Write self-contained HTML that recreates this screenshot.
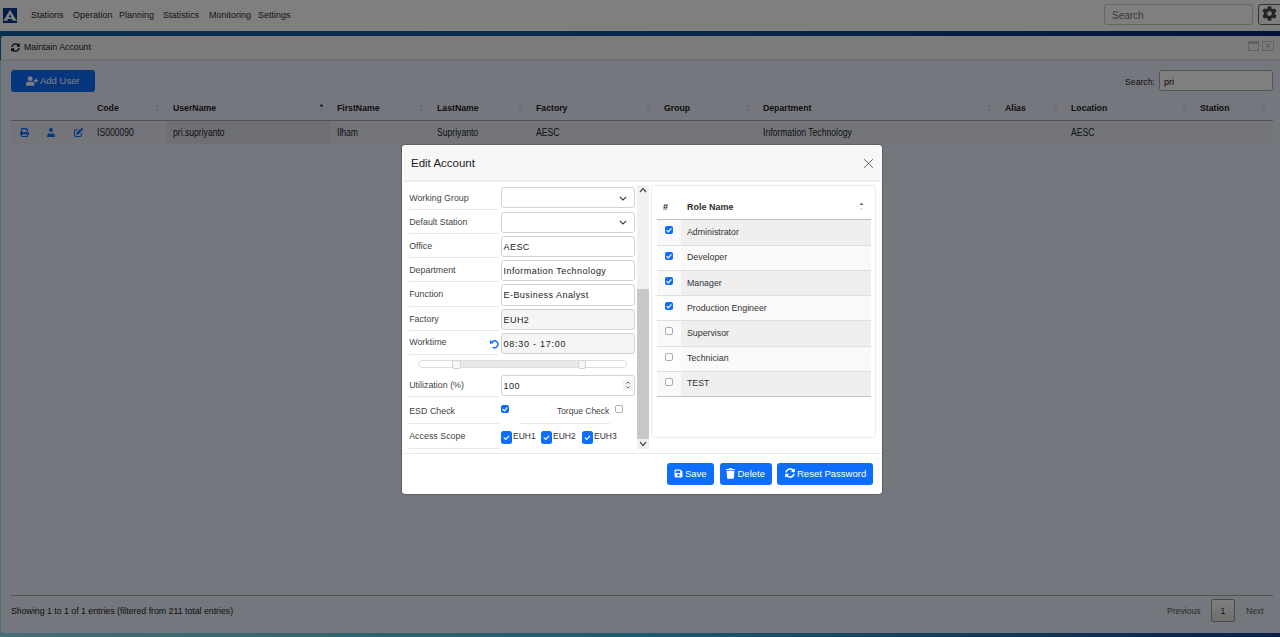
<!DOCTYPE html>
<html><head><meta charset="utf-8"><title>Maintain Account</title>
<style>
html,body{margin:0;padding:0;}
body{width:1280px;height:637px;overflow:hidden;position:relative;font-family:"Liberation Sans", sans-serif;
background:linear-gradient(90deg,#14609f 0%,#1054a0 50%,#082474 100%) 0 0/100% 60px no-repeat,linear-gradient(90deg,#90dde6 0%,#3eb4dc 50%,#144090 100%);}
.t{position:absolute;white-space:nowrap;}
.r{position:absolute;}
svg.r{display:block;}
</style></head><body>
<div class="r" style="left:0px;top:0px;width:1280px;height:31px;background:#fff;"></div>
<svg class="r" style="left:3px;top:8px" width="14" height="15" viewBox="0 0 14 15"><rect width="14" height="15" fill="#0a3a8c"/><path fill-rule="evenodd" d="M7 1.8 L13.9 12.8 H9.7 L8.9 10.9 H5.1 L4.3 12.8 H0.3 Z M7 6.2 L8.4 9.2 H5.6 Z" fill="#fff"/></svg>
<div class="t" style="left:30.50px;top:8.23px;font-size:9.9px;line-height:13px;color:#2a2a2a;transform:scaleX(0.9091);transform-origin:0 0;">Stations</div>
<div class="t" style="left:72.50px;top:8.23px;font-size:9.9px;line-height:13px;color:#2a2a2a;transform:scaleX(0.9091);transform-origin:0 0;">Operation</div>
<div class="t" style="left:119.30px;top:8.23px;font-size:9.9px;line-height:13px;color:#2a2a2a;transform:scaleX(0.9091);transform-origin:0 0;">Planning</div>
<div class="t" style="left:162.80px;top:8.23px;font-size:9.9px;line-height:13px;color:#2a2a2a;transform:scaleX(0.9091);transform-origin:0 0;">Statistics</div>
<div class="t" style="left:208.70px;top:8.23px;font-size:9.9px;line-height:13px;color:#2a2a2a;transform:scaleX(0.9091);transform-origin:0 0;">Monitoring</div>
<div class="t" style="left:258.40px;top:8.23px;font-size:9.9px;line-height:13px;color:#2a2a2a;transform:scaleX(0.9091);transform-origin:0 0;">Settings</div>
<div class="r" style="left:1104px;top:4px;width:149px;height:21px;background:#fff;border:1px solid #ccc;border-radius:3px;box-sizing:border-box;"></div>
<div class="t" style="left:1112.00px;top:8.80px;font-size:10px;line-height:13px;color:#777;">Search</div>
<div class="r" style="left:1258px;top:4px;width:30px;height:21px;background:#fff;border:1px solid #666;border-radius:3px;box-sizing:border-box;"></div>
<svg class="r" style="left:1262px;top:6px" width="15" height="15" viewBox="0 0 512 512"><path fill="#4a4a4a" d="M487.4 315.7l-42.6-24.6c4.3-23.2 4.3-47 0-70.2l42.6-24.6c4.9-2.8 7.1-8.6 5.5-14-11.1-35.6-30-67.8-54.7-94.6-3.8-4.1-10-5.1-14.8-2.3L380.8 110c-17.9-15.4-38.5-27.3-60.8-35.1V25.8c0-5.6-3.9-10.5-9.4-11.7-36.7-8.2-74.3-7.8-109.2 0-5.5 1.2-9.4 6.1-9.4 11.7V75c-22.2 7.9-42.8 19.8-60.8 35.1L88.7 85.5c-4.9-2.8-11-1.9-14.8 2.3-24.7 26.7-43.6 58.9-54.7 94.6-1.7 5.4.6 11.2 5.5 14L67.3 221c-4.3 23.2-4.3 47 0 70.2l-42.6 24.6c-4.9 2.8-7.1 8.6-5.5 14 11.1 35.6 30 67.8 54.7 94.6 3.8 4.1 10 5.1 14.8 2.3l42.6-24.6c17.9 15.4 38.5 27.3 60.8 35.1v49.2c0 5.6 3.9 10.5 9.4 11.7 36.7 8.2 74.3 7.8 109.2 0 5.5-1.2 9.4-6.1 9.4-11.7v-49.2c22.2-7.9 42.8-19.8 60.8-35.1l42.6 24.6c4.9 2.8 11 1.9 14.8-2.3 24.7-26.7 43.6-58.9 54.7-94.6 1.5-5.5-.7-11.3-5.6-14.1zM256 336c-44.1 0-80-35.9-80-80s35.9-80 80-80 80 35.9 80 80-35.9 80-80 80z"/></svg>
<div class="r" style="left:1px;top:36px;width:1279px;height:597px;background:#e9eefa;border-radius:3px 0 0 3px;"></div>
<div class="r" style="left:1px;top:36px;width:1279px;height:25px;background:#f6f6f6;border-bottom:2px solid #dddee3;box-sizing:border-box;border-radius:3px 0 0 0;"></div>
<svg class="r" style="left:11px;top:42.5px" width="9" height="9" viewBox="0 0 512 512"><path fill="#111" d="M370.7 133.3C339.5 104 298.9 88 255.8 88c-77.5.1-144.3 53.2-162.8 126.9-1.3 5.4-6.1 9.2-11.7 9.2H24.1c-7.5 0-13.2-6.8-11.8-14.2C33.9 94.9 134.8 8 256 8c66.4 0 126.8 26.1 171.3 68.7L463 41c15.1-15.1 41-4.4 41 17v134c0 13.3-10.7 24-24 24H346c-21.4 0-32.1-25.9-17-41l41.7-41.7zM32 296h134c21.4 0 32.1 25.9 17 41l-41.7 41.7c31.2 29.3 71.8 45.3 114.9 45.3 77.4-.1 144.3-53.1 162.8-126.8 1.3-5.4 6.1-9.2 11.7-9.2h57.3c7.5 0 13.2 6.8 11.8 14.2C478.1 417.1 377.2 504 256 504c-66.4 0-126.8-26.1-171.3-68.7L49 471c-15.1 15.1-41 4.4-41-17V320c0-13.3 10.7-24 24-24z"/></svg>
<div class="t" style="left:24.00px;top:40.13px;font-size:9.9px;line-height:13px;color:#222;transform:scaleX(0.8889);transform-origin:0 0;">Maintain Account</div>
<div class="r" style="left:1248px;top:41px;width:11px;height:10px;border:1px solid #c4c4c4;border-top:3px solid #c4c4c4;box-sizing:border-box;background:#f5f5f5;"></div>
<div class="r" style="left:1262px;top:41px;width:12px;height:10px;border:1px solid #c8c8c8;box-sizing:border-box;background:#f5f5f5;"></div>
<svg class="r" style="left:1262px;top:41px" width="12" height="10" viewBox="0 0 12 10"><path d="M4 2.5 L8 7.5 M8 2.5 L4 7.5" stroke="#b8b8b8" stroke-width="1"/></svg>
<div class="r" style="left:11px;top:70px;width:84px;height:22px;background:#0d6efd;border-radius:3px;"></div>
<svg class="r" style="left:26px;top:76px" width="12" height="10" viewBox="0 0 640 512"><path fill="#fff" d="M624 208h-64v-64c0-8.8-7.2-16-16-16h-32c-8.8 0-16 7.2-16 16v64h-64c-8.8 0-16 7.2-16 16v32c0 8.8 7.2 16 16 16h64v64c0 8.8 7.2 16 16 16h32c8.8 0 16-7.2 16-16v-64h64c8.8 0 16-7.2 16-16v-32c0-8.8-7.2-16-16-16zm-400 48c70.7 0 128-57.3 128-128S294.7 0 224 0 96 57.3 96 128s57.3 128 128 128zm89.6 32h-16.7c-22.2 10.2-46.9 16-72.9 16s-50.6-5.8-72.9-16h-16.7C60.2 288 0 348.2 0 422.4V464c0 26.5 21.5 48 48 48h352c26.5 0 48-21.5 48-48v-41.6c0-74.2-60.2-134.4-134.4-134.4z"/></svg>
<div class="t" style="left:40.00px;top:75.36px;font-size:9.5px;line-height:12px;color:#fff;">Add User</div>
<div class="t" style="left:1125.00px;top:74.59px;font-size:9.7px;line-height:13px;color:#222;transform:scaleX(0.8969);transform-origin:0 0;">Search:</div>
<div class="r" style="left:1159px;top:70px;width:114px;height:21px;background:#fff;border:1px solid #aaa;border-radius:3px;box-sizing:border-box;"></div>
<div class="t" style="left:1164.00px;top:75.53px;font-size:9px;line-height:12px;color:#111;">pri</div>
<div class="t" style="left:97.30px;top:102.06px;font-size:9.5px;line-height:12px;color:#222;font-weight:700;transform:scaleX(0.9158);transform-origin:0 0;">Code</div>
<svg class="r" style="left:155px;top:103px" width="5" height="10" viewBox="0 0 5 10"><path d="M0.5 3.5 L2.5 1 L4.5 3.5Z" fill="#d4d4d4"/><path d="M0.5 6.5 L2.5 9 L4.5 6.5Z" fill="#d4d4d4"/></svg>
<div class="t" style="left:173.30px;top:102.06px;font-size:9.5px;line-height:12px;color:#222;font-weight:700;transform:scaleX(0.9158);transform-origin:0 0;">UserName</div>
<svg class="r" style="left:319px;top:103px" width="5" height="10" viewBox="0 0 5 10"><path d="M0.5 3.5 L2.5 1 L4.5 3.5Z" fill="#222"/><path d="M0.5 6.5 L2.5 9 L4.5 6.5Z" fill="#d4d4d4"/></svg>
<div class="t" style="left:337.30px;top:102.06px;font-size:9.5px;line-height:12px;color:#222;font-weight:700;transform:scaleX(0.9158);transform-origin:0 0;">FirstName</div>
<svg class="r" style="left:419px;top:103px" width="5" height="10" viewBox="0 0 5 10"><path d="M0.5 3.5 L2.5 1 L4.5 3.5Z" fill="#d4d4d4"/><path d="M0.5 6.5 L2.5 9 L4.5 6.5Z" fill="#d4d4d4"/></svg>
<div class="t" style="left:437.30px;top:102.06px;font-size:9.5px;line-height:12px;color:#222;font-weight:700;transform:scaleX(0.9158);transform-origin:0 0;">LastName</div>
<svg class="r" style="left:518px;top:103px" width="5" height="10" viewBox="0 0 5 10"><path d="M0.5 3.5 L2.5 1 L4.5 3.5Z" fill="#d4d4d4"/><path d="M0.5 6.5 L2.5 9 L4.5 6.5Z" fill="#d4d4d4"/></svg>
<div class="t" style="left:536.30px;top:102.06px;font-size:9.5px;line-height:12px;color:#222;font-weight:700;transform:scaleX(0.9158);transform-origin:0 0;">Factory</div>
<svg class="r" style="left:646px;top:103px" width="5" height="10" viewBox="0 0 5 10"><path d="M0.5 3.5 L2.5 1 L4.5 3.5Z" fill="#d4d4d4"/><path d="M0.5 6.5 L2.5 9 L4.5 6.5Z" fill="#d4d4d4"/></svg>
<div class="t" style="left:664.30px;top:102.06px;font-size:9.5px;line-height:12px;color:#222;font-weight:700;transform:scaleX(0.9158);transform-origin:0 0;">Group</div>
<svg class="r" style="left:745px;top:103px" width="5" height="10" viewBox="0 0 5 10"><path d="M0.5 3.5 L2.5 1 L4.5 3.5Z" fill="#d4d4d4"/><path d="M0.5 6.5 L2.5 9 L4.5 6.5Z" fill="#d4d4d4"/></svg>
<div class="t" style="left:763.30px;top:102.06px;font-size:9.5px;line-height:12px;color:#222;font-weight:700;transform:scaleX(0.9158);transform-origin:0 0;">Department</div>
<svg class="r" style="left:987px;top:103px" width="5" height="10" viewBox="0 0 5 10"><path d="M0.5 3.5 L2.5 1 L4.5 3.5Z" fill="#d4d4d4"/><path d="M0.5 6.5 L2.5 9 L4.5 6.5Z" fill="#d4d4d4"/></svg>
<div class="t" style="left:1005.30px;top:102.06px;font-size:9.5px;line-height:12px;color:#222;font-weight:700;transform:scaleX(0.9158);transform-origin:0 0;">Alias</div>
<svg class="r" style="left:1053px;top:103px" width="5" height="10" viewBox="0 0 5 10"><path d="M0.5 3.5 L2.5 1 L4.5 3.5Z" fill="#d4d4d4"/><path d="M0.5 6.5 L2.5 9 L4.5 6.5Z" fill="#d4d4d4"/></svg>
<div class="t" style="left:1071.30px;top:102.06px;font-size:9.5px;line-height:12px;color:#222;font-weight:700;transform:scaleX(0.9158);transform-origin:0 0;">Location</div>
<svg class="r" style="left:1182px;top:103px" width="5" height="10" viewBox="0 0 5 10"><path d="M0.5 3.5 L2.5 1 L4.5 3.5Z" fill="#d4d4d4"/><path d="M0.5 6.5 L2.5 9 L4.5 6.5Z" fill="#d4d4d4"/></svg>
<div class="t" style="left:1200.30px;top:102.06px;font-size:9.5px;line-height:12px;color:#222;font-weight:700;transform:scaleX(0.9158);transform-origin:0 0;">Station</div>
<svg class="r" style="left:1261px;top:103px" width="5" height="10" viewBox="0 0 5 10"><path d="M0.5 3.5 L2.5 1 L4.5 3.5Z" fill="#d4d4d4"/><path d="M0.5 6.5 L2.5 9 L4.5 6.5Z" fill="#d4d4d4"/></svg>
<div class="r" style="left:11px;top:120px;width:1262px;height:1px;background:#a4a4a4;"></div>
<div class="r" style="left:11px;top:121px;width:1262px;height:23px;background:rgba(0,0,0,0.012);"></div>
<div class="r" style="left:167px;top:121px;width:164px;height:23px;background:rgba(0,0,0,0.045);"></div>
<div class="t" style="left:97.30px;top:126.29px;font-size:10px;line-height:13px;color:#222;transform:scaleX(0.8600);transform-origin:0 0;">IS000090</div>
<div class="t" style="left:173.30px;top:126.29px;font-size:10px;line-height:13px;color:#222;transform:scaleX(0.8600);transform-origin:0 0;">pri.supriyanto</div>
<div class="t" style="left:337.30px;top:126.29px;font-size:10px;line-height:13px;color:#222;transform:scaleX(0.8600);transform-origin:0 0;">Ilham</div>
<div class="t" style="left:437.20px;top:126.29px;font-size:10px;line-height:13px;color:#222;transform:scaleX(0.8600);transform-origin:0 0;">Supriyanto</div>
<div class="t" style="left:536.30px;top:126.29px;font-size:10px;line-height:13px;color:#222;transform:scaleX(0.8600);transform-origin:0 0;">AESC</div>
<div class="t" style="left:763.20px;top:126.29px;font-size:10px;line-height:13px;color:#222;transform:scaleX(0.8600);transform-origin:0 0;">Information Technology</div>
<div class="t" style="left:1071.30px;top:126.29px;font-size:10px;line-height:13px;color:#222;transform:scaleX(0.8600);transform-origin:0 0;">AESC</div>
<svg class="r" style="left:20px;top:128px" width="9" height="9" viewBox="0 0 512 512"><path fill="#0d6efd" d="M448 192V77.25c0-8.49-3.37-16.62-9.37-22.63L393.37 9.37c-6-6-14.14-9.37-22.63-9.37H96C78.33 0 64 14.33 64 32v160c-35.35 0-64 28.65-64 64v112c0 8.84 7.16 16 16 16h48v96c0 17.67 14.33 32 32 32h320c17.67 0 32-14.33 32-32v-96h48c8.84 0 16-7.16 16-16V256c0-35.35-28.65-64-64-64zm-64 256H128v-96h256v96zm0-224H128V64h192v48c0 8.84 7.16 16 16 16h48v96zm48 72c-13.25 0-24-10.75-24-24 0-13.26 10.75-24 24-24s24 10.74 24 24c0 13.25-10.75 24-24 24z"/></svg>
<svg class="r" style="left:47px;top:128px" width="8" height="9" viewBox="0 0 448 512"><circle cx="224" cy="118" r="112" fill="#0d6efd"/><path fill="#0d6efd" d="M130 292 L224 360 L318 292 C400 300 448 380 448 460 V512 H0 V460 C0 380 48 300 130 292Z"/></svg>
<svg class="r" style="left:74px;top:128px" width="9" height="9" viewBox="0 0 512 512"><path fill="#0d6efd" d="M471.6 21.7c-21.9-21.9-57.3-21.9-79.2 0L362.3 51.7l97.9 97.9 30.1-30.1c21.9-21.9 21.9-57.3 0-79.2L471.6 21.7zm-299.2 220c-6.1 6.1-10.8 13.6-13.5 21.9l-29.6 88.8c-2.9 8.6-.6 18.1 5.8 24.6s15.9 8.7 24.6 5.8l88.8-29.6c8.2-2.7 15.7-7.4 21.9-13.5L437.7 172.3 339.7 74.3 172.4 241.7zM96 64C43 64 0 107 0 160V416c0 53 43 96 96 96H352c53 0 96-43 96-96V320c0-17.7-14.3-32-32-32s-32 14.3-32 32v96c0 17.7-14.3 32-32 32H96c-17.7 0-32-14.3-32-32V160c0-17.7 14.3-32 32-32h96c17.7 0 32-14.3 32-32s-14.3-32-32-32H96z"/></svg>
<div class="r" style="left:11px;top:595px;width:1262px;height:1px;background:#a4a4a4;"></div>
<div class="t" style="left:10.60px;top:604.96px;font-size:9.5px;line-height:12px;color:#222;transform:scaleX(0.9211);transform-origin:0 0;">Showing 1 to 1 of 1 entries (filtered from 211 total entries)</div>
<div class="t" style="left:1167.00px;top:604.86px;font-size:9.5px;line-height:12px;color:#555;transform:scaleX(0.9053);transform-origin:0 0;">Previous</div>
<div class="r" style="left:1211px;top:599px;width:24px;height:23px;border:1px solid #979797;border-radius:2px;box-sizing:border-box;background:linear-gradient(#fff,#dcdcdc);"></div>
<div class="t" style="left:1220.50px;top:605.66px;font-size:8.6px;line-height:11px;color:#222;">1</div>
<div class="t" style="left:1245.50px;top:604.86px;font-size:9.5px;line-height:12px;color:#555;transform:scaleX(0.9053);transform-origin:0 0;">Next</div>
<div class="r" style="left:0px;top:0px;width:1280px;height:637px;background:rgba(0,0,0,0.5);"></div>
<div class="r" style="left:401px;top:144px;width:482px;height:351px;background:#fff;border:1px solid rgba(0,0,0,.2);background-clip:padding-box;border-radius:4px;box-sizing:border-box;"></div>
<div class="r" style="left:403px;top:146px;width:478px;height:36px;background:#f7f7f7;border-bottom:2px solid #eceef0;box-sizing:border-box;border-radius:3px 3px 0 0;"></div>
<div class="t" style="left:411.00px;top:156.20px;font-size:11.5px;line-height:15px;color:#222;">Edit Account</div>
<svg class="r" style="left:863px;top:158px" width="11" height="11" viewBox="0 0 11 11"><path d="M1.2 1.2 L9.8 9.8 M9.8 1.2 L1.2 9.8" stroke="#6a6a6a" stroke-width="1"/></svg>
<div class="t" style="left:409.20px;top:192.26px;font-size:8.9px;line-height:12px;color:#444;">Working Group</div>
<div class="t" style="left:409.20px;top:216.26px;font-size:8.9px;line-height:12px;color:#444;">Default Station</div>
<div class="t" style="left:409.20px;top:240.36px;font-size:8.9px;line-height:12px;color:#444;">Office</div>
<div class="t" style="left:409.20px;top:264.36px;font-size:8.9px;line-height:12px;color:#444;">Department</div>
<div class="t" style="left:409.20px;top:288.46px;font-size:8.9px;line-height:12px;color:#444;">Function</div>
<div class="t" style="left:409.20px;top:313.36px;font-size:8.9px;line-height:12px;color:#444;">Factory</div>
<div class="t" style="left:409.20px;top:335.56px;font-size:8.9px;line-height:12px;color:#444;">Worktime</div>
<div class="t" style="left:409.20px;top:378.66px;font-size:8.9px;line-height:12px;color:#444;">Utilization (%)</div>
<div class="t" style="left:409.20px;top:404.66px;font-size:8.9px;line-height:12px;color:#444;">ESD Check</div>
<div class="t" style="left:409.20px;top:429.96px;font-size:8.9px;line-height:12px;color:#444;">Access Scope</div>
<div class="r" style="left:409px;top:209px;width:90px;height:1px;background:#e9e9e9;"></div>
<div class="r" style="left:409px;top:233px;width:90px;height:1px;background:#e9e9e9;"></div>
<div class="r" style="left:409px;top:257px;width:90px;height:1px;background:#e9e9e9;"></div>
<div class="r" style="left:409px;top:281px;width:90px;height:1px;background:#e9e9e9;"></div>
<div class="r" style="left:409px;top:306px;width:90px;height:1px;background:#e9e9e9;"></div>
<div class="r" style="left:409px;top:330px;width:90px;height:1px;background:#e9e9e9;"></div>
<div class="r" style="left:409px;top:354px;width:90px;height:1px;background:#e9e9e9;"></div>
<div class="r" style="left:409px;top:396px;width:90px;height:1px;background:#e9e9e9;"></div>
<div class="r" style="left:409px;top:423px;width:90px;height:1px;background:#e9e9e9;"></div>
<div class="r" style="left:409px;top:448px;width:90px;height:1px;background:#e9e9e9;"></div>
<div class="r" style="left:520px;top:423px;width:90px;height:1px;background:#e9e9e9;"></div>
<div class="r" style="left:501px;top:187px;width:134px;height:21px;background:#fff;border:1px solid #d2d2d2;border-radius:3px;box-sizing:border-box;"></div>
<div class="r" style="left:501px;top:212px;width:134px;height:21px;background:#fff;border:1px solid #d2d2d2;border-radius:3px;box-sizing:border-box;"></div>
<div class="r" style="left:501px;top:236px;width:134px;height:21px;background:#fff;border:1px solid #d2d2d2;border-radius:3px;box-sizing:border-box;"></div>
<div class="t" style="left:503.50px;top:240.53px;font-size:9px;line-height:12px;color:#222;letter-spacing:0.45px;">AESC</div>
<div class="r" style="left:501px;top:260px;width:134px;height:21px;background:#fff;border:1px solid #d2d2d2;border-radius:3px;box-sizing:border-box;"></div>
<div class="t" style="left:503.50px;top:264.53px;font-size:9px;line-height:12px;color:#222;letter-spacing:0.45px;">Information Technology</div>
<div class="r" style="left:501px;top:284px;width:134px;height:22px;background:#fff;border:1px solid #d2d2d2;border-radius:3px;box-sizing:border-box;"></div>
<div class="t" style="left:503.50px;top:288.53px;font-size:9px;line-height:12px;color:#222;letter-spacing:0.45px;">E-Business Analyst</div>
<div class="r" style="left:501px;top:309px;width:134px;height:21px;background:#f5f5f5;border:1px solid #d2d2d2;border-radius:3px;box-sizing:border-box;"></div>
<div class="t" style="left:503.50px;top:313.53px;font-size:9px;line-height:12px;color:#222;letter-spacing:0.45px;">EUH2</div>
<div class="r" style="left:501px;top:333px;width:134px;height:21px;background:#f5f5f5;border:1px solid #d2d2d2;border-radius:3px;box-sizing:border-box;"></div>
<div class="t" style="left:503.50px;top:337.53px;font-size:9px;line-height:12px;color:#222;letter-spacing:0.75px;">08:30 - 17:00</div>
<div class="r" style="left:501px;top:375px;width:134px;height:21px;background:#fff;border:1px solid #d2d2d2;border-radius:3px;box-sizing:border-box;"></div>
<div class="t" style="left:503.50px;top:379.53px;font-size:9px;line-height:12px;color:#222;letter-spacing:0.45px;">100</div>
<svg class="r" style="left:619px;top:196px" width="8" height="5" viewBox="0 0 8 5"><path d="M0.8 0.8 L4 4 L7.2 0.8" stroke="#444" stroke-width="1.2" fill="none"/></svg>
<svg class="r" style="left:619px;top:220px" width="8" height="5" viewBox="0 0 8 5"><path d="M0.8 0.8 L4 4 L7.2 0.8" stroke="#444" stroke-width="1.2" fill="none"/></svg>
<svg class="r" style="left:489px;top:339px" width="10" height="10" viewBox="0 0 10 10"><path d="M3.4 2.6 A3.4 3.4 0 1 1 3.6 8.1" stroke="#0d6efd" stroke-width="1.4" fill="none"/><path d="M0.9 0.9 L1.1 5.1 L5.0 4.0 Z" fill="#0d6efd"/></svg>
<div class="r" style="left:418px;top:360px;width:209px;height:8px;background:#fff;border:1px solid #ddd;border-radius:4px;box-sizing:border-box;"></div>
<div class="r" style="left:456px;top:361px;width:125px;height:6px;background:#e9e9e9;"></div>
<div class="r" style="left:452px;top:360px;width:9px;height:9px;background:#f6f6f6;border:1px solid #d3d3d3;border-radius:2px;box-sizing:border-box;"></div>
<div class="r" style="left:578px;top:360px;width:8px;height:9px;background:#f6f6f6;border:1px solid #d3d3d3;border-radius:2px;box-sizing:border-box;"></div>
<div class="r" style="left:623px;top:380px;width:10px;height:10px;background:#eef0f3;"></div>
<svg class="r" style="left:624px;top:380px" width="8" height="10" viewBox="0 0 8 10"><path d="M2.4 3.6 L4 2 L5.6 3.6 M2.4 6.4 L4 8 L5.6 6.4" stroke="#6f7380" stroke-width="1" fill="none"/></svg>
<svg class="r" style="left:501px;top:405px" width="8" height="8" viewBox="0 0 8 8"><rect x="0" y="0" width="8" height="8" rx="2" fill="#0d6efd"/><path d="M1.60 4.16 L3.36 5.92 L6.40 2.40" stroke="#fff" stroke-width="1.2" fill="none"/></svg>
<div class="t" style="left:556.90px;top:405.89px;font-size:8.5px;line-height:11px;color:#444;">Torque Check</div>
<div class="r" style="left:615px;top:405px;width:8px;height:8px;border:1px solid #ababab;border-radius:2px;box-sizing:border-box;background:#fff;"></div>
<svg class="r" style="left:501px;top:431px" width="11" height="13" viewBox="0 0 11 13"><rect x="0" y="0" width="11" height="13" rx="2.5" fill="#0d6efd"/><path d="M2.90 6.60 L4.70 8.40 L8.10 4.90" stroke="#fff" stroke-width="1.2" fill="none"/></svg>
<div class="t" style="left:513.00px;top:431.39px;font-size:8.5px;line-height:11px;color:#333;">EUH1</div>
<svg class="r" style="left:541px;top:431px" width="11" height="13" viewBox="0 0 11 13"><rect x="0" y="0" width="11" height="13" rx="2.5" fill="#0d6efd"/><path d="M2.90 6.60 L4.70 8.40 L8.10 4.90" stroke="#fff" stroke-width="1.2" fill="none"/></svg>
<div class="t" style="left:553.00px;top:431.39px;font-size:8.5px;line-height:11px;color:#333;">EUH2</div>
<svg class="r" style="left:582px;top:431px" width="11" height="13" viewBox="0 0 11 13"><rect x="0" y="0" width="11" height="13" rx="2.5" fill="#0d6efd"/><path d="M2.90 6.60 L4.70 8.40 L8.10 4.90" stroke="#fff" stroke-width="1.2" fill="none"/></svg>
<div class="t" style="left:594.00px;top:431.39px;font-size:8.5px;line-height:11px;color:#333;">EUH3</div>
<div class="r" style="left:637px;top:185px;width:12px;height:264px;background:#f1f1f1;"></div>
<div class="r" style="left:637px;top:289px;width:12px;height:150px;background:#c8c8c8;"></div>
<svg class="r" style="left:639px;top:187px" width="8" height="6" viewBox="0 0 8 6"><path d="M1 5 L4 1.5 L7 5" stroke="#505050" stroke-width="1.2" fill="none"/></svg>
<svg class="r" style="left:639px;top:441px" width="8" height="6" viewBox="0 0 8 6"><path d="M1 1 L4 4.5 L7 1" stroke="#505050" stroke-width="1.2" fill="none"/></svg>
<div class="r" style="left:651px;top:185px;width:225px;height:253px;border:1px solid #ececec;border-radius:3px;box-sizing:border-box;background:#fff;"></div>
<div class="t" style="left:663.00px;top:201.26px;font-size:9.2px;line-height:12px;color:#2a2a2a;font-weight:700;">#</div>
<div class="t" style="left:687.00px;top:201.13px;font-size:9px;line-height:12px;color:#2e2e2e;font-weight:700;">Role Name</div>
<svg class="r" style="left:859px;top:202px" width="5" height="9" viewBox="0 0 5 9"><path d="M0.7 3 L2.5 0.8 L4.3 3Z" fill="#555"/><path d="M0.7 6 L2.5 8.2 L4.3 6Z" fill="#ddd"/></svg>
<div class="r" style="left:657px;top:219px;width:214px;height:1px;background:#bdbdbd;"></div>
<div class="r" style="left:657px;top:220px;width:24px;height:26px;background:#f9f9f9;"></div>
<div class="r" style="left:681px;top:220px;width:190px;height:26px;background:#efefef;"></div>
<div class="r" style="left:657px;top:245px;width:214px;height:1px;background:#dedede;"></div>
<svg class="r" style="left:665px;top:226px" width="8" height="8" viewBox="0 0 8 8"><rect x="0" y="0" width="8" height="8" rx="2" fill="#0d6efd"/><path d="M1.60 4.16 L3.36 5.92 L6.40 2.40" stroke="#fff" stroke-width="1.2" fill="none"/></svg>
<div class="t" style="left:687.00px;top:227.19px;font-size:8.8px;line-height:11px;color:#333;">Administrator</div>
<div class="r" style="left:657px;top:246px;width:24px;height:25px;background:#fdfdfd;"></div>
<div class="r" style="left:681px;top:246px;width:190px;height:25px;background:#f9f9f9;"></div>
<div class="r" style="left:657px;top:270px;width:214px;height:1px;background:#dedede;"></div>
<svg class="r" style="left:665px;top:252px" width="8" height="8" viewBox="0 0 8 8"><rect x="0" y="0" width="8" height="8" rx="2" fill="#0d6efd"/><path d="M1.60 4.16 L3.36 5.92 L6.40 2.40" stroke="#fff" stroke-width="1.2" fill="none"/></svg>
<div class="t" style="left:687.00px;top:252.39px;font-size:8.8px;line-height:11px;color:#333;">Developer</div>
<div class="r" style="left:657px;top:271px;width:24px;height:25px;background:#f9f9f9;"></div>
<div class="r" style="left:681px;top:271px;width:190px;height:25px;background:#efefef;"></div>
<div class="r" style="left:657px;top:295px;width:214px;height:1px;background:#dedede;"></div>
<svg class="r" style="left:665px;top:277px" width="8" height="8" viewBox="0 0 8 8"><rect x="0" y="0" width="8" height="8" rx="2" fill="#0d6efd"/><path d="M1.60 4.16 L3.36 5.92 L6.40 2.40" stroke="#fff" stroke-width="1.2" fill="none"/></svg>
<div class="t" style="left:687.00px;top:277.59px;font-size:8.8px;line-height:11px;color:#333;">Manager</div>
<div class="r" style="left:657px;top:296px;width:24px;height:25px;background:#fdfdfd;"></div>
<div class="r" style="left:681px;top:296px;width:190px;height:25px;background:#f9f9f9;"></div>
<div class="r" style="left:657px;top:320px;width:214px;height:1px;background:#dedede;"></div>
<svg class="r" style="left:665px;top:302px" width="8" height="8" viewBox="0 0 8 8"><rect x="0" y="0" width="8" height="8" rx="2" fill="#0d6efd"/><path d="M1.60 4.16 L3.36 5.92 L6.40 2.40" stroke="#fff" stroke-width="1.2" fill="none"/></svg>
<div class="t" style="left:687.00px;top:302.79px;font-size:8.8px;line-height:11px;color:#333;">Production Engineer</div>
<div class="r" style="left:657px;top:321px;width:24px;height:26px;background:#f9f9f9;"></div>
<div class="r" style="left:681px;top:321px;width:190px;height:26px;background:#efefef;"></div>
<div class="r" style="left:657px;top:346px;width:214px;height:1px;background:#dedede;"></div>
<div class="r" style="left:665px;top:327px;width:8px;height:8px;border:1px solid #ababab;border-radius:2px;box-sizing:border-box;background:#fff;"></div>
<div class="t" style="left:687.00px;top:327.99px;font-size:8.8px;line-height:11px;color:#333;">Supervisor</div>
<div class="r" style="left:657px;top:347px;width:24px;height:25px;background:#fdfdfd;"></div>
<div class="r" style="left:681px;top:347px;width:190px;height:25px;background:#f9f9f9;"></div>
<div class="r" style="left:657px;top:371px;width:214px;height:1px;background:#dedede;"></div>
<div class="r" style="left:665px;top:353px;width:8px;height:8px;border:1px solid #ababab;border-radius:2px;box-sizing:border-box;background:#fff;"></div>
<div class="t" style="left:687.00px;top:353.19px;font-size:8.8px;line-height:11px;color:#333;">Technician</div>
<div class="r" style="left:657px;top:372px;width:24px;height:25px;background:#f9f9f9;"></div>
<div class="r" style="left:681px;top:372px;width:190px;height:25px;background:#efefef;"></div>
<div class="r" style="left:657px;top:396px;width:214px;height:1px;background:#c4c4c4;"></div>
<div class="r" style="left:665px;top:378px;width:8px;height:8px;border:1px solid #ababab;border-radius:2px;box-sizing:border-box;background:#fff;"></div>
<div class="t" style="left:687.00px;top:378.39px;font-size:8.8px;line-height:11px;color:#333;">TEST</div>
<div class="r" style="left:402px;top:453px;width:480px;height:1px;background:#e9e9e9;"></div>
<div class="r" style="left:667px;top:463px;width:47px;height:22px;background:#0d6efd;border-radius:3px;"></div>
<div class="r" style="left:720px;top:463px;width:52px;height:22px;background:#0d6efd;border-radius:3px;"></div>
<div class="r" style="left:777px;top:463px;width:96px;height:22px;background:#0d6efd;border-radius:3px;"></div>
<svg class="r" style="left:674px;top:469px" width="9" height="9" viewBox="0 0 448 512"><path fill="#fff" d="M433.9 129.9l-83.9-83.9A48 48 0 0 0 316.1 32H48C21.5 32 0 53.5 0 80v352c0 26.5 21.5 48 48 48h352c26.5 0 48-21.5 48-48V163.9a48 48 0 0 0 -14.1-33.9zM224 416c-35.3 0-64-28.7-64-64 0-35.3 28.7-64 64-64s64 28.7 64 64c0 35.3-28.7 64-64 64zm96-304.5V212c0 6.6-5.4 12-12 12H76c-6.6 0-12-5.4-12-12V108c0-6.6 5.4-12 12-12h228.5c3.2 0 6.2 1.3 8.5 3.5l3.5 3.5A12 12 0 0 1 320 111.5z"/></svg>
<div class="t" style="left:685.00px;top:468.06px;font-size:9.5px;line-height:12px;color:#fff;">Save</div>
<svg class="r" style="left:726px;top:468px" width="9" height="11" viewBox="0 0 448 512"><path fill="#fff" d="M135.2 17.7L128 32H32C14.3 32 0 46.3 0 64S14.3 96 32 96H416c17.7 0 32-14.3 32-32s-14.3-32-32-32H320l-7.2-14.3C307.4 6.8 296.3 0 284.2 0H163.8c-12.1 0-23.2 6.8-28.6 17.7zM416 128H32L53.2 467c1.6 25.3 22.6 45 47.9 45H346.9c25.3 0 46.3-19.7 47.9-45L416 128z"/></svg>
<div class="t" style="left:737.50px;top:468.06px;font-size:9.5px;line-height:12px;color:#fff;">Delete</div>
<svg class="r" style="left:785px;top:468px" width="10" height="10" viewBox="0 0 512 512"><path fill="#fff" d="M370.7 133.3C339.5 104 298.9 88 255.8 88c-77.5.1-144.3 53.2-162.8 126.9-1.3 5.4-6.1 9.2-11.7 9.2H24.1c-7.5 0-13.2-6.8-11.8-14.2C33.9 94.9 134.8 8 256 8c66.4 0 126.8 26.1 171.3 68.7L463 41c15.1-15.1 41-4.4 41 17v134c0 13.3-10.7 24-24 24H346c-21.4 0-32.1-25.9-17-41l41.7-41.7zM32 296h134c21.4 0 32.1 25.9 17 41l-41.7 41.7c31.2 29.3 71.8 45.3 114.9 45.3 77.4-.1 144.3-53.1 162.8-126.8 1.3-5.4 6.1-9.2 11.7-9.2h57.3c7.5 0 13.2 6.8 11.8 14.2C478.1 417.1 377.2 504 256 504c-66.4 0-126.8-26.1-171.3-68.7L49 471c-15.1 15.1-41 4.4-41-17V320c0-13.3 10.7-24 24-24z"/></svg>
<div class="t" style="left:797.00px;top:468.06px;font-size:9.5px;line-height:12px;color:#fff;">Reset Password</div>
</body></html>
